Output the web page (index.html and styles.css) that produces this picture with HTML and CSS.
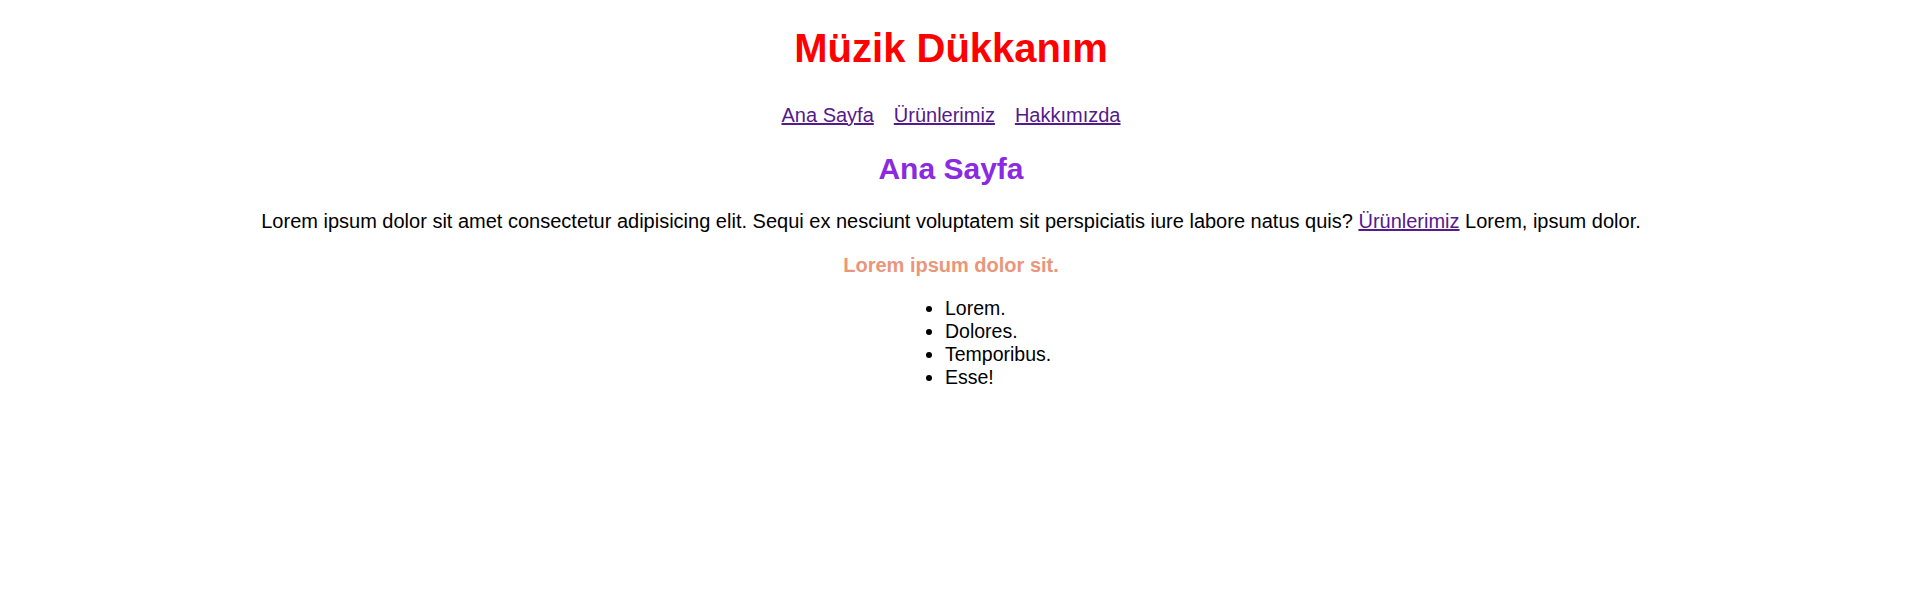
FILE: index.html
```html
<!DOCTYPE html>
<html lang="tr">
<head>
<meta charset="utf-8">
<title>Müzik Dükkanım</title>
<link rel="stylesheet" href="styles.css">
</head>
<body>
<header class="site-header">
  <h1 class="title">Müzik Dükkanım</h1>
  <nav class="nav">
    <a class="link" href="#">Ana Sayfa</a>
    <a class="link" href="#">Ürünlerimiz</a>
    <a class="link" href="#">Hakkımızda</a>
  </nav>
</header>
<main class="content">
  <h2 class="page-title">Ana Sayfa</h2>
  <p class="text">Lorem ipsum dolor sit amet consectetur adipisicing elit. Sequi ex nesciunt voluptatem sit perspiciatis iure labore natus quis? <a class="link" href="#">Ürünlerimiz</a> Lorem, ipsum dolor.</p>
  <h4 class="sub-title">Lorem ipsum dolor sit.</h4>
  <ul class="list">
    <li>Lorem.</li>
    <li>Dolores.</li>
    <li>Temporibus.</li>
    <li>Esse!</li>
  </ul>
</main>
</body>
</html>
```
FILE: styles.css
```css
body {
  margin: 8px 17px 8px 8px;
  font-family: "Liberation Sans", Arial, sans-serif;
  font-size: 20px;
  text-align: center;
  background: #fff;
  color: #000;
}
.title {
  color: #ff0000;
  font-size: 40px;
  margin: 18px 0 33px;
}
.nav {
  display: flex;
  justify-content: center;
  gap: 20px;
}
.link {
  color: #551a8b;
}
.page-title {
  color: #8a2be2;
  font-size: 30px;
  margin: 24.5px 0 24.5px;
}
.text {
  margin: 24.5px 0 20.5px;
}
.sub-title {
  color: #e9967a;
  font-size: 20px;
  margin: 20.5px 0 20px;
}
.list {
  width: 52px;
  margin: 20px auto;
  padding-left: 40px;
  font-size: 19.5px;
  text-align: left;
}
```
